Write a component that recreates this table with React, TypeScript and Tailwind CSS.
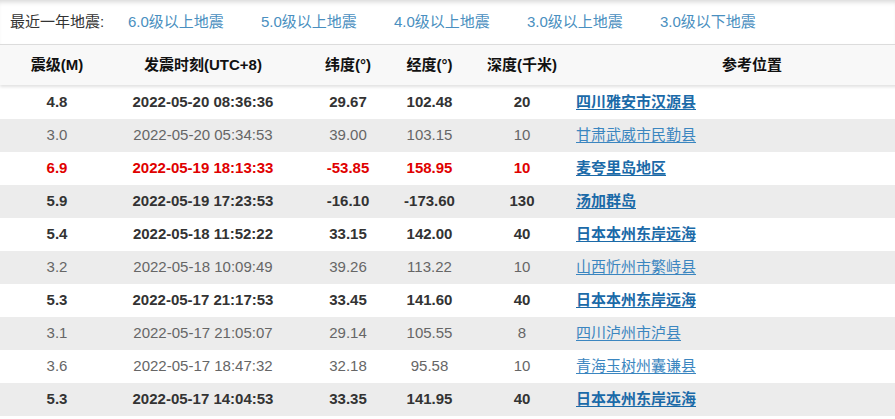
const levels = ["6.0级以上地震", "5.0级以上地震", "4.0级以上地震", "3.0级以上地震", "3.0级以下地震"];

type Quake = {
  m: string;
  time: string;
  lat: string;
  lng: string;
  depth: string;
  place: string;
};

const quakes: Quake[] = [
  { m: "4.8", time: "2022-05-20 08:36:36", lat: "29.67", lng: "102.48", depth: "20", place: "四川雅安市汉源县" },
  { m: "3.0", time: "2022-05-20 05:34:53", lat: "39.00", lng: "103.15", depth: "10", place: "甘肃武威市民勤县" },
  { m: "6.9", time: "2022-05-19 18:13:33", lat: "-53.85", lng: "158.95", depth: "10", place: "麦夸里岛地区" },
  { m: "5.9", time: "2022-05-19 17:23:53", lat: "-16.10", lng: "-173.60", depth: "130", place: "汤加群岛" },
  { m: "5.4", time: "2022-05-18 11:52:22", lat: "33.15", lng: "142.00", depth: "40", place: "日本本州东岸远海" },
  { m: "3.2", time: "2022-05-18 10:09:49", lat: "39.26", lng: "113.22", depth: "10", place: "山西忻州市繁峙县" },
  { m: "5.3", time: "2022-05-17 21:17:53", lat: "33.45", lng: "141.60", depth: "40", place: "日本本州东岸远海" },
  { m: "3.1", time: "2022-05-17 21:05:07", lat: "29.14", lng: "105.55", depth: "8", place: "四川泸州市泸县" },
  { m: "3.6", time: "2022-05-17 18:47:32", lat: "32.18", lng: "95.58", depth: "10", place: "青海玉树州囊谦县" },
  { m: "5.3", time: "2022-05-17 14:04:53", lat: "33.35", lng: "141.95", depth: "40", place: "日本本州东岸远海" },
];

const cols = "grid grid-cols-[114px_178px_105px_65px_114px_352px]";

const App = () => {
  return (
    <div
      className="w-full overflow-x-hidden bg-white text-[15px] min-h-[419px]"
      style={{ fontFamily: '"Liberation Sans", Arial, "Noto Sans CJK SC", sans-serif' }}
    >
      {/* Filter bar */}
      <div className="h-[44px] flex items-center pl-[10px] shadow-[inset_0_5px_5px_-3px_rgba(0,0,0,0.16)]">
        <span className="text-[#333] w-[118px]">最近一年地震:</span>
        <div className="flex gap-[37px]">
          {levels.map((l) => (
            <a key={l} href="#" className="text-[#4a8fc0] w-[96px] whitespace-nowrap">
              {l}
            </a>
          ))}
        </div>
      </div>

      <div className="w-[928px]">
        {/* Header */}
        <div className={`${cols} h-[41px] items-center border-t border-[#dcdcdc] bg-[#f8f8f8] font-bold text-[#111] shadow-[0_2px_3px_rgba(0,0,0,0.12)] relative`}>
          <div className="text-center">震级(M)</div>
          <div className="text-center">发震时刻(UTC+8)</div>
          <div className="text-center pl-[7px]">纬度(°)</div>
          <div className="text-center">经度(°)</div>
          <div className="text-center pl-[6px]">深度(千米)</div>
          <div className="text-center">参考位置</div>
        </div>

        {/* Rows */}
        <div className="pt-px">
          {quakes.map((q, i) => {
            const big = parseFloat(q.m) >= 4;
            const red = parseFloat(q.m) >= 6;
            const tone = red ? "text-[#e00000] font-bold" : big ? "text-[#333] font-bold" : "text-[#666]";
            return (
              <div
                key={i}
                className={`${cols} h-[33px] items-center ${i % 2 === 1 ? "bg-[#ececec]" : "bg-white"} ${tone}`}
              >
                <div className="text-center">{q.m}</div>
                <div className="text-center">{q.time}</div>
                <div className="text-center pl-[7px]">{q.lat}</div>
                <div className="text-center">{q.lng}</div>
                <div className="text-center pl-[6px]">{q.depth}</div>
                <div>
                  <a
                    href="#"
                    className={`underline underline-offset-2 ${big ? "text-[#1b6aa8] font-bold" : "text-[#3b86c0] font-normal"}`}
                  >
                    {q.place}
                  </a>
                </div>
              </div>
            );
          })}
        </div>
      </div>
    </div>
  );
};

export default App;
